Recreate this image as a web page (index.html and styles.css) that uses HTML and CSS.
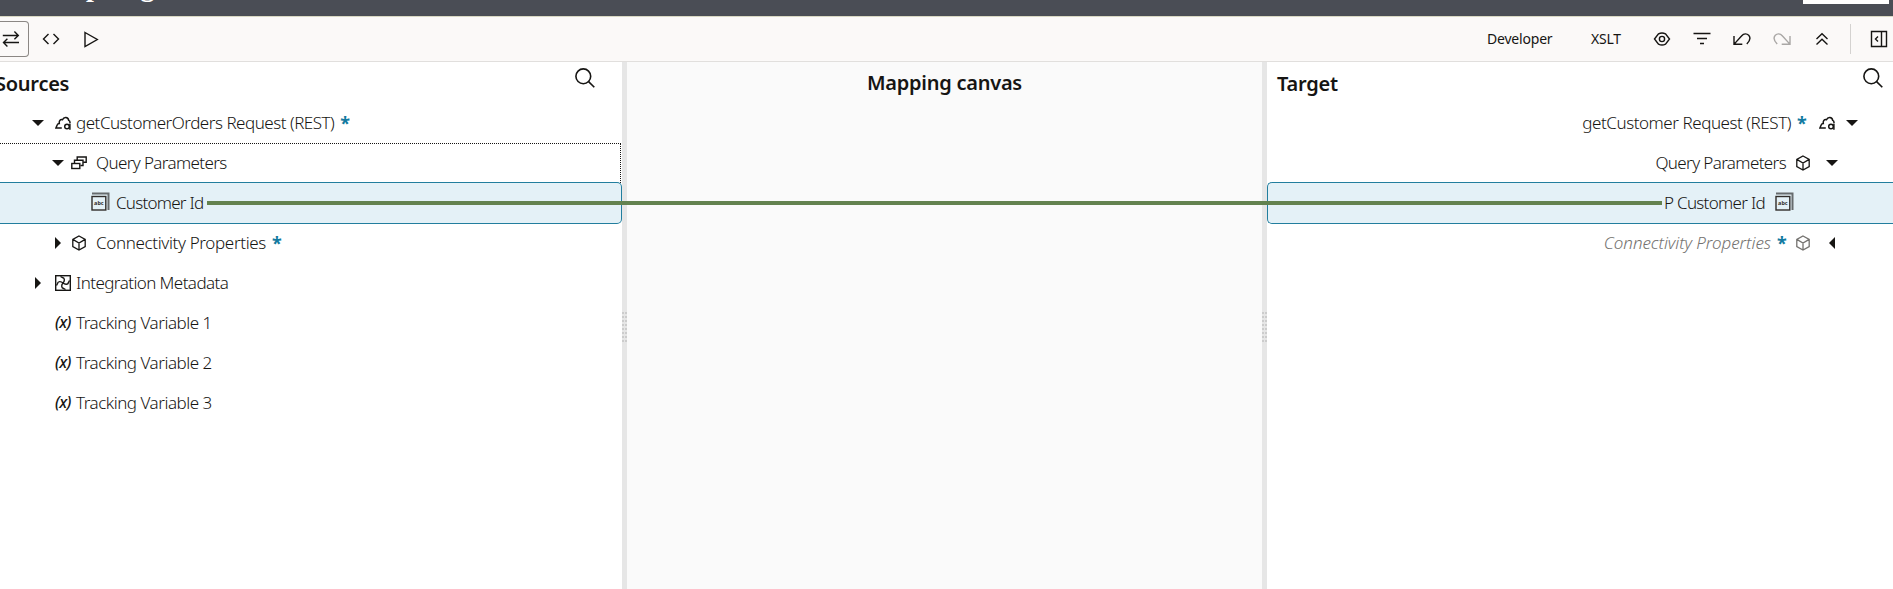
FILE: index.html
```
<!DOCTYPE html>
<html lang="en">
<head>
<meta charset="utf-8">
<title>Mapping canvas</title>
<link rel="stylesheet" href="styles.css">
</head>
<body>
<svg width="0" height="0" class="defs" aria-hidden="true">
  <symbol id="search" viewBox="0 0 20 20"><g fill="none" stroke="currentColor" stroke-width="1.6"><circle cx="8.3" cy="8.3" r="7.4"/><path d="M13.6 13.6L19.3 19.3"/></g></symbol>
  <symbol id="cloud" viewBox="0 0 16 16"><g fill="none" stroke="currentColor" stroke-width="1.5"><path d="M6.800 13H.9L2.400 9.600C2.700 8.700 3.300 8.400 4.300 8.400C3.900 5.600 5.500 4.100 7.500 4.700C8.800 1.600 13.200 1.700 13.700 5.400C14.800 5.900 15.100 6.900 15 8"/><circle cx="12" cy="11.500" r="2.300"/><path d="M14.900 8.600V14.700"/></g></symbol>
  <symbol id="stack" viewBox="0 0 16 14"><g fill="none" stroke="currentColor" stroke-width="1.4"><path d="M6.200 4V1H15.200V6.200H12.200"/><path d="M3.500 7V4.300H12V9.500H9.400"/><rect x=".8" y="7.500" width="8" height="5"/></g></symbol>
  <symbol id="abc" viewBox="0 0 19 19"><path d="M1 1.500H17.500V18" fill="none" stroke="#666b6d" stroke-width="2"/><rect x="1" y="4.500" width="13.800" height="13.500" fill="none" stroke="#312d2a" stroke-width="1.400"/><text x="7.900" y="13" text-anchor="middle" class="abc-text">abc</text></symbol>
  <symbol id="cube" viewBox="0 0 14 16"><path d="M7 1L13.200 4.400V11.600L7 15L.8 11.600V4.400ZM.8 4.400L7 8L13.200 4.400M7 8V15" fill="none" stroke="currentColor" stroke-width="1.300"/></symbol>
  <symbol id="meta" viewBox="0 0 16 16"><g fill="none" stroke="currentColor" stroke-width="1.400"><rect x=".7" y=".7" width="14.600" height="14.600"/><path d="M7.500 2.500C10 3 9.800 6 8 8C6.200 10 6.200 13 8.500 13.500M2.500 8.500C3 6 6 6.200 8 8C10 9.800 13 9.800 13.500 7.500M5.500 1.500L8 2.800M10.500 14.500L8 13.200M1.500 10.500L2.800 8M14.500 5.500L13.200 8"/></g></symbol>
</svg>
<div class="app">
  <header class="titlebar"><div class="title"><span>p</span><span>g</span></div><span class="title-box"></span></header>
  <div class="toolbar">
    <div class="tools">
      <button class="tool active"><svg width="18" height="18" viewBox="0 0 18 18"><path d="M.8 5.500H16M12.400 1.600L16.300 5.500L12.400 9.200M17 12.500H1.800M5.400 8.800L1.500 12.500L5.400 16.400"/></svg></button>
      <button class="tool code"><svg width="18" height="12" viewBox="0 0 18 12"><path d="M6.500 1L1.500 6L6.500 11M11.500 1L16.500 6L11.500 11"/></svg></button>
      <button class="tool play"><svg width="15" height="17" viewBox="0 0 15 17"><path d="M1 1.500L13.300 8.500L1 15.500Z"/></svg></button>
    </div>
    <div class="actions">
      <span class="label dev">Developer</span>
      <span class="label xslt">XSLT</span>
      <svg class="act" width="20" height="20" viewBox="0 0 20 20"><path d="M2.500 10L6.500 4.900Q10 3 13.500 4.900L17.500 10L13.500 15.100Q10 17 6.500 15.100Z"/><circle cx="10" cy="10" r="2.600"/></svg>
      <svg class="act filter" width="20" height="20" viewBox="0 0 20 20"><path d="M1.500 4.500H18.500M5 9.500H15M8 14.500H12"/></svg>
      <svg class="act" width="20" height="20" viewBox="0 0 20 20"><path d="M2 7V15.300H10.300M2.400 14.900L9.500 7C12 4 15 4.500 16.700 6.300C18.600 8.400 18.300 11.500 14.800 15"/></svg>
      <svg class="act muted" width="20" height="20" viewBox="0 0 20 20"><path d="M18 7V15.300H9.700M17.600 14.900L10.500 7C8 4 5 4.500 3.300 6.300C1.400 8.400 1.700 11.500 5.200 15"/></svg>
      <svg class="act" width="20" height="20" viewBox="0 0 20 20"><path d="M4.500 10L10 4.800L15.500 10M4.500 15.500L10 10.300L15.500 15.500"/></svg>
      <span class="divider"></span>
      <svg class="act" width="20" height="20" viewBox="0 0 20 20"><path d="M2.500 2.500H17.500V17.500H2.500ZM12.500 2.500V17.500M9 7.500L6.500 10L9 12.500"/></svg>
    </div>
  </div>
  <main class="panes">
    <section class="pane sources">
      <div class="pane-head"><h2>Sources</h2><svg class="search" width="20" height="20"><use href="#search"/></svg></div>
      <div class="tree">
        <div class="row l1"><i class="caret down"></i><svg class="ico" width="16" height="16"><use href="#cloud"/></svg><span class="t t-orders">getCustomerOrders Request (REST)</span><b class="req">*</b></div>
        <div class="row l2 focused"><i class="caret down"></i><svg class="ico stack" width="16" height="14"><use href="#stack"/></svg><span class="t t-query">Query Parameters</span></div>
        <div class="row l3 selected"><svg class="ico" width="19" height="19"><use href="#abc"/></svg><span class="t t-cust">Customer Id</span></div>
        <div class="row l2"><i class="caret right"></i><svg class="ico" width="14" height="16"><use href="#cube"/></svg><span class="t t-conn">Connectivity Properties</span><b class="req">*</b></div>
        <div class="row l1"><i class="caret right"></i><svg class="ico" width="16" height="16"><use href="#meta"/></svg><span class="t t-meta">Integration Metadata</span></div>
        <div class="row l1"><i class="caret"></i><span class="ico var">(x)</span><span class="t t-track">Tracking Variable 1</span></div>
        <div class="row l1"><i class="caret"></i><span class="ico var">(x)</span><span class="t t-track">Tracking Variable 2</span></div>
        <div class="row l1"><i class="caret"></i><span class="ico var">(x)</span><span class="t t-track">Tracking Variable 3</span></div>
      </div>
    </section>
    <div class="splitter"><span class="grip"></span></div>
    <section class="pane canvas"><h2>Mapping canvas</h2></section>
    <div class="splitter"><span class="grip"></span></div>
    <section class="pane target">
      <div class="pane-head"><h2>Target</h2><svg class="search" width="20" height="20"><use href="#search"/></svg></div>
      <div class="tree">
        <div class="row l1"><i class="caret down"></i><svg class="ico" width="16" height="16"><use href="#cloud"/></svg><b class="req">*</b><span class="t t-getc">getCustomer Request (REST)</span></div>
        <div class="row l2"><i class="caret down"></i><svg class="ico" width="14" height="16"><use href="#cube"/></svg><span class="t t-query">Query Parameters</span></div>
        <div class="row l3 selected"><svg class="ico" width="19" height="19"><use href="#abc"/></svg><span class="t t-pcust">P Customer Id</span></div>
        <div class="row l2 unused"><i class="caret left"></i><svg class="ico" width="14" height="16"><use href="#cube"/></svg><b class="req">*</b><span class="t t-conni">Connectivity Properties</span></div>
      </div>
    </section>
    <span class="mapping-line"></span>
  </main>
</div>
</body>
</html>
```
FILE: styles.css
```
* { box-sizing: border-box; }
body { margin: 0; font-family: "Noto Sans", sans-serif; color: #161513; background: #fff; }
.defs { position: absolute; }
.app { height: 589px; display: flex; flex-direction: column; overflow: hidden; }
.titlebar { height: 17px; flex: none; background: #4a4d55; border-bottom: 1px solid #d9d8c3; display: flex; justify-content: space-between; padding: 0 4px 0 86px; overflow: hidden; }
.title { display: flex; gap: 39px; height: 30px; font: bold 28px/30px "Liberation Serif", serif; color: #fff; margin-top: -28px; }
.title-box { width: 86px; height: 4px; background: #fff; }
.toolbar { height: 45px; flex: none; background: #fbf9f8; border-bottom: 1px solid #e1dfdd; display: flex; justify-content: space-between; }
.tools { display: flex; align-items: center; }
.tool { border: 0; background: none; padding: 0; display: flex; align-items: center; color: #161513; }
.tool svg { fill: none; stroke: currentColor; stroke-width: 1.4; }
.tool.active { height: 36px; width: 29px; border: 1px solid #8b8784; border-left: 0; border-radius: 0 4px 4px 0; padding-left: 2px; }
.tool.code { margin-left: 13px; }
.tool.play { margin-left: 24px; }
.actions { display: flex; align-items: center; padding-right: 4px; }
.label { font-size: 14px; font-weight: 400; white-space: nowrap; padding-bottom: 1px; letter-spacing: -.2px; }
.dev { width: 104px; }
.xslt { width: 61px; }
.act { margin-right: 20px; fill: none; stroke: #161513; stroke-width: 1.4; }
.act.muted { stroke: #a9a7a5; }
.act:last-child { margin-right: 0; }
.divider { width: 1px; height: 30px; background: #d4d2d0; margin: 0 18px 0 -2px; }
.panes { flex: 1; display: grid; grid-template-columns: 622px 5px 635px 5px 1fr; position: relative; min-height: 0; }
.pane { overflow: hidden; }
h2 { margin: 0; font-size: 20px; line-height: 41px; font-weight: 600; white-space: nowrap; letter-spacing: -.25px; }
.pane-head { height: 41px; display: flex; justify-content: space-between; }
.pane-head h2 { line-height: 43px; }
.sources h2 { margin-left: -5px; }
.search { margin-top: 6px; }
.sources .search { margin-right: 27px; }
.target .search { margin-right: 10px; }
.target h2 { margin-left: 10px; }
.canvas { background: #fafafa; text-align: center; }
.row { height: 40px; display: flex; align-items: center; }
.target .row { flex-direction: row-reverse; }
.l1 { padding-left: 32px; }
.l2 { padding-left: 52px; }
.l3 { padding-left: 91px; }
.target .l1 { padding: 0 35px 0 0; }
.target .l2 { padding: 0 55px 0 0; }
.target .l3 { padding: 0 98px 0 0; }
.focused { border: 1px dotted #161513; border-width: 1px 1px 0 0; margin-right: 1px; padding-bottom: 1px; }
.selected { height: 42px; margin: -1px 0; background: #e4f1f7; border: 1px solid #227e9e; position: relative; }
.sources .selected { border-left: 0; border-radius: 0 5px 5px 0; }
.target .selected { border-right: 0; border-radius: 5px 0 0 5px; }
.caret { width: 12px; flex: none; display: flex; justify-content: center; }
.caret::before { content: ""; border: 0 solid transparent; }
.down::before { border-width: 6px 6px 0; border-top-color: #161513; }
.right::before { border-width: 6px 0 6px 6px; border-left-color: #161513; }
.left::before { border-width: 6px 6px 6px 0; border-right-color: #161513; }
.ico { flex: none; margin: 0 5px 0 11px; }
.l2 .ico { margin: 0 10px 0 8px; }
.l2 .ico.stack { margin: 0 9px 0 7px; }
.l3 .ico { margin: 0 6px 3px 0; }
.target .l1 .ico { margin: 0 11px 0 13px; }
.target .l2 .ico { margin: 0 16px 0 10px; }
.target .l3 .ico { margin: 0 1px 3px 10px; }
.t { font-size: 17px; font-weight: 300; white-space: nowrap; color: #161513; padding-bottom: 2px; }
.t-orders { letter-spacing: -.49px; }
.t-query { letter-spacing: -.63px; }
.t-cust { letter-spacing: -.75px; }
.t-pcust { letter-spacing: -.7px; }
.t-conn { letter-spacing: -.35px; }
.t-meta { letter-spacing: -.58px; }
.t-track { letter-spacing: -.48px; }
.t-getc { letter-spacing: -.45px; }
.t-conni { letter-spacing: -.05px; }
.req { color: #127aa0; font-size: 18px; line-height: 24px; width: 10px; margin-left: 6px; }
.target .req { margin: 0 -1px 0 6px; }
.var { font-size: 16px; font-style: italic; font-weight: 500; width: 16px; letter-spacing: -.7px; padding-bottom: 3px; }
.abc-text { font: bold 5.500px "Noto Sans", sans-serif; fill: #312d2a; }
.unused .t { font-style: italic; color: #74726f; }
.unused .ico { color: #74726f; }
.splitter { background: #e6e6e6; display: flex; align-items: flex-start; }
.grip { width: 5px; height: 30px; margin-top: 250px; background: linear-gradient(90deg, #ccc 2px, transparent 2px 3px, #ccc 3px); -webkit-mask: repeating-linear-gradient(#000 0 2px, transparent 2px 4px); mask: repeating-linear-gradient(#000 0 2px, transparent 2px 4px); }
.mapping-line { position: absolute; left: 207px; top: 139px; width: 1455px; height: 4px; background: #63824f; }
```
